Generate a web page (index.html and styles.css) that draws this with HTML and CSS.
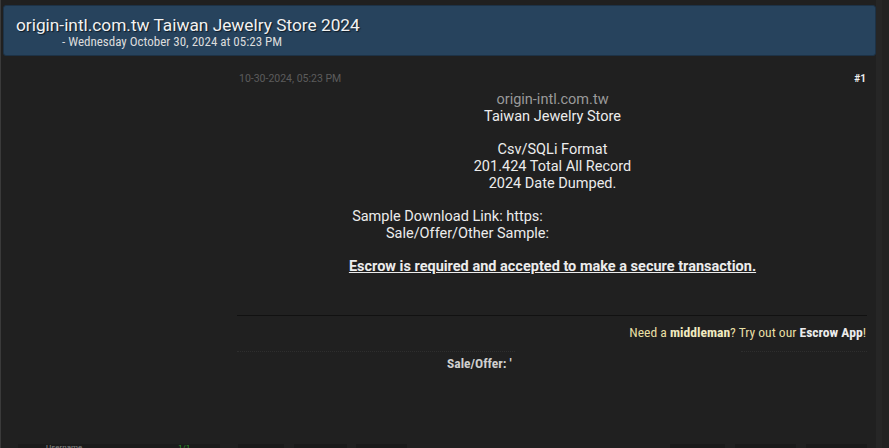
FILE: index.html
```
<!DOCTYPE html>
<html lang="en">

<head>
    <meta charset="UTF-8">
    <meta name="viewport" content="width=device-width, initial-scale=1.0">
    <title>origin-intl.com.tw Taiwan Jewelry Store 2024</title>
    <link rel="stylesheet" href="styles.css">
</head>

<body>
    <div class="page">
        <div class="thread-head">
            <h1 class="thread-title">origin-intl.com.tw Taiwan Jewelry Store 2024</h1>
            <div class="thread-date">- Wednesday October 30, 2024 at 05:23 PM</div>
        </div>

        <div class="post">
            <div class="post-user"></div>
            <div class="post-main">
                <div class="post-meta">
                    <span class="post-time">10-30-2024, 05:23 PM</span>
                    <a href="javascript:;" class="post-num">#1</a>
                </div>
                <div class="post-body">
                    <div class="muted">origin-intl.com.tw</div>
                    <div>Taiwan Jewelry Store</div>
                    <br>
                    <div>Csv/SQLi Format</div>
                    <div>201.424 Total All Record</div>
                    <div>2024 Date Dumped.</div>
                    <br>
                    <div>Sample Download Link: https:<span class="hidden-link w1"></span></div>
                    <div>Sale/Offer/Other Sample:<span class="hidden-link w2"></span></div>
                    <br>
                    <div class="escrow">Escrow is required and accepted to make a secure transaction.</div>
                </div>
                <div class="post-sep"></div>
                <div class="promo">Need a <b>middleman</b>? Try out our <b class="app">Escrow App</b>!</div>
                <div class="sig-sep">
                    <span class="dots left"></span>
                    <span class="dots right"></span>
                </div>
                <div class="sig">Sale/Offer: <span class="tick">'</span></div>
            </div>
        </div>

        <div class="next-bar">
            <span class="nb-user"><span class="nb-name">Username</span><span class="nb-green">1/1</span></span>
            <span class="nb-box b1"></span>
            <span class="nb-box b2"></span>
            <span class="nb-box b3"></span>
            <span class="nb-space"></span>
            <span class="nb-box b4"></span>
            <span class="nb-box b5"></span>
            <span class="nb-box b6"></span>
        </div>
    </div>
</body>

</html>
```

FILE: styles.css
```
body {
    margin: 0;
    background-color: #222;
    font-family: Roboto, "Liberation Sans", sans-serif;
    color: #e6e6e6;
    overflow: hidden;
}

.page {
    width: 882px;
    height: 448px;
    background-color: #202020;
    border-left: 1px solid #3a3a3a;
    border-right: 6px solid #262626;
    box-sizing: border-box;
    padding-top: 5px;
    display: flex;
    flex-direction: column;
    position: relative;
}

.thread-head {
    margin: 0 0 0 2px;
    height: 51px;
    box-sizing: border-box;
    background-color: #27435d;
    border: 1px solid #1d3246;
    border-radius: 3px;
    padding: 9px 0 0 12px;
}

.thread-title {
    margin: 0;
    font-size: 17.3px;
    font-weight: normal;
    line-height: 21px;
    color: #f2f2f2;
    text-shadow: 1px 1px 1px #0d1a26;
}

.thread-date {
    margin: -1px 0 0 46px;
    font-family: "Roboto Condensed", "Liberation Sans Narrow", Roboto, sans-serif;
    font-size: 13px;
    line-height: 14px;
    color: #dcdcdc;
}

.post {
    display: flex;
    flex: 1;
}

.post-user {
    width: 236px;
    flex-shrink: 0;
}

.post-main {
    width: 630px;
    display: flex;
    flex-direction: column;
}

.post-meta {
    display: flex;
    justify-content: space-between;
    padding: 16px 0 0 2px;
    font-size: 10.5px;
    line-height: 14px;
}

.post-time {
    color: #5c5c5c;
}

.post-num {
    color: #eee;
    font-weight: bold;
    font-size: 10px;
    text-decoration: none;
    margin-right: 1px;
}

.post-body {
    text-align: center;
    font-size: 14.5px;
    line-height: 16.7px;
    color: #ececec;
    padding: 6px 0 0 1px;
}

.muted {
    color: #9a9a9a;
}

.hidden-link {
    display: inline-block;
}

.w1 {
    width: 210px;
}

.w2 {
    width: 170px;
}

.escrow {
    font-weight: bold;
    text-decoration: underline;
}

.post-sep {
    margin-top: 39px;
    height: 1px;
    background-color: #111;
}

.promo {
    text-align: right;
    font-family: "Roboto Condensed", "Liberation Sans Narrow", Roboto, sans-serif;
    font-size: 13.6px;
    line-height: 16px;
    color: #e7dfa4;
    padding: 8px 1px 0 0;
}

.promo b {
    color: #f0ebc0;
}

.promo .app {
    color: #ececec;
}

.sig-sep {
    display: flex;
    justify-content: space-between;
    margin-top: 11px;
}

.dots {
    height: 0;
    border-top: 1px dotted #2e2e2e;
}

.dots.left {
    width: 278px;
}

.dots.right {
    width: 126px;
}

.sig {
    margin: 3px 0 0 210px;
    font-family: "Roboto Condensed", "Liberation Sans Narrow", Roboto, sans-serif;
    font-size: 13.5px;
    line-height: 16px;
    font-weight: bold;
    color: #cfcfcf;
}

.next-bar {
    position: absolute;
    left: 17px;
    right: 0;
    top: 444px;
    height: 4px;
    display: flex;
}

.nb-user {
    width: 202px;
    background-color: #1b1b1b;
    display: flex;
    font-size: 8px;
    line-height: 8px;
    overflow: hidden;
}

.nb-name {
    color: #8a8a8a;
    margin-left: 28px;
    width: 132px;
}

.nb-green {
    color: #2c9a2c;
}

.nb-box {
    background-color: #1a1a1a;
}

.b1 { width: 46px; margin-left: 18px; }
.b2 { width: 53px; margin-left: 10px; }
.b3 { width: 51px; margin-left: 9px; }
.nb-space { width: 263px; }
.b4 { width: 55px; }
.b5 { width: 61px; margin-left: 10px; }
.b6 { width: 61px; margin-left: 10px; }
```
